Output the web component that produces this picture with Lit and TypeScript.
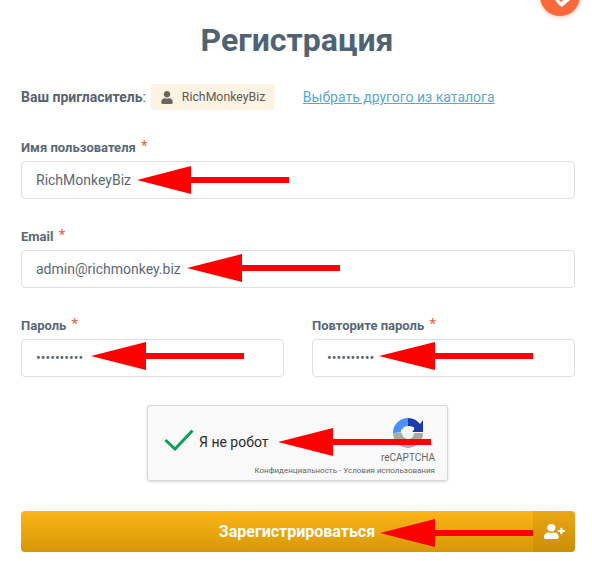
import { LitElement, html, css, svg } from "lit";
import { customElement } from "lit/decorators.js";

const USER = "M224 256c70.7 0 128-57.3 128-128S294.7 0 224 0 96 57.3 96 128s57.3 128 128 128zm89.6 32h-16.7c-22.2 10.2-46.9 16-72.9 16s-50.6-5.8-72.9-16h-16.7C60.2 288 0 348.2 0 422.4V464c0 26.5 21.5 48 48 48h352c26.5 0 48-21.5 48-48v-41.6c0-74.2-60.2-134.4-134.4-134.4z";
const USER_PLUS = "M624 208h-64v-64c0-8.8-7.2-16-16-16h-32c-8.8 0-16 7.2-16 16v64h-64c-8.8 0-16 7.2-16 16v32c0 8.8 7.2 16 16 16h64v64c0 8.8 7.2 16 16 16h32c8.8 0 16-7.2 16-16v-64h64c8.8 0 16-7.2 16-16v-32c0-8.8-7.2-16-16-16zm-400 48c70.7 0 128-57.3 128-128S294.7 0 224 0 96 57.3 96 128s57.3 128 128 128zm89.6 32h-16.7c-22.2 10.2-46.9 16-72.9 16s-50.6-5.8-72.9-16h-16.7C60.2 288 0 348.2 0 422.4V464c0 26.5 21.5 48 48 48h352c26.5 0 48-21.5 48-48v-41.6c0-74.2-60.2-134.4-134.4-134.4z";

// tip x, y, head base x, shaft end x
const ARROWS: [number, number, number, number][] = [
  [137, 180, 191, 289],
  [187, 268, 242, 340],
  [91, 356, 146, 244],
  [379, 356, 435, 533],
  [278, 442, 333, 431],
  [380, 533, 435, 533],
];

@customElement("app-root")
export class AppRoot extends LitElement {
  static styles = css`
    :host {
      display: block;
      position: relative;
      width: 592px;
      height: 561px;
      overflow: hidden;
      background: #fff;
      font-family: Roboto, "Liberation Sans", sans-serif;
      color: #54626f;
    }
    .page {
      display: flex;
      flex-direction: column;
      padding: 0 17px 0 21px;
    }
    h1 {
      margin: 21px 2px 0 0;
      height: 38px;
      line-height: 38px;
      text-align: center;
      font-size: 32px;
      font-weight: 700;
      color: #506373;
    }
    .inviter {
      margin-top: 25px;
      height: 26px;
      display: flex;
      align-items: center;
      font-size: 14px;
    }
    .inviter b { font-weight: 700; color: #57636f; }
    .chip {
      margin-left: 5px;
      width: 124px;
      height: 26px;
      box-sizing: border-box;
      padding-left: 10px;
      display: flex;
      align-items: center;
      gap: 9px;
      border-radius: 3px;
      background: #fdf3e3;
      font-size: 12.3px;
      color: #5f5a52;
    }
    .chip svg { width: 12px; height: 13px; fill: #6b655c; }
    a {
      margin-left: 28px;
      font-size: 14px;
      color: #5aa6d8;
      text-decoration: underline;
    }
    .field { display: flex; flex-direction: column; min-width: 0; }
    .field label {
      height: 18px;
      line-height: 18px;
      font-size: 13px;
      font-weight: 700;
      color: #5a6875;
      margin-bottom: 5px;
    }
    .req { color: #ec5c45; font-weight: 400; font-size: 15px; margin-left: 2px; position: relative; top: -1px; }
    input {
      box-sizing: border-box;
      width: 100%;
      height: 38px;
      padding: 0 14px;
      border: 1px solid #dce0e3;
      border-radius: 4px;
      background: #fff;
      font-family: inherit;
      font-size: 14px;
      color: #5b6875;
      outline: none;
    }
    .rows {
      margin-top: 28px;
      display: flex;
      flex-direction: column;
      gap: 28px;
    }
    .pair {
      display: grid;
      grid-template-columns: 263px 263px;
      column-gap: 28px;
    }
    .captcha {
      margin: 28px 0 0 126px;
      width: 301px;
      height: 76px;
      box-sizing: border-box;
      display: flex;
      border: 1px solid #d6d6d6;
      border-radius: 3px;
      background: #f9f9f9;
      box-shadow: 0 1px 3px rgba(0, 0, 0, 0.15);
      padding: 0 12px 0 16px;
      position: relative;
    }
    .check { width: 30px; height: 24px; margin-top: 21px; flex: none; }
    .robot {
      margin: 27px 0 0 5px;
      font-size: 14px;
      line-height: 18px;
      color: #2b2b2b;
      flex: 1;
    }
    .rc {
      width: 190px;
      position: absolute;
      right: 12px;
      top: 11px;
      display: flex;
      flex-direction: column;
      align-items: flex-end;
    }
    .rc svg { width: 32px; height: 32px; margin-right: 11px; }
    .rc .brand { margin-top: 3px; font-size: 10px; line-height: 12px; color: #666; }
    .rc .terms { margin-top: 1px; font-size: 8px; line-height: 12px; color: #666; white-space: nowrap; }
    .btn {
      margin-top: 30px;
      width: 554px;
      height: 41px;
      display: flex;
      border-radius: 4px;
      overflow: hidden;
      background: linear-gradient(#fdb517, #d69808);
      color: #fff;
    }
    .btn .text {
      flex: 1;
      padding-left: 40px;
      display: flex;
      align-items: center;
      justify-content: center;
      font-size: 16px;
      font-weight: 700;
    }
    .btn .ico {
      width: 42px;
      display: flex;
      align-items: center;
      justify-content: center;
      background: rgba(120, 80, 0, 0.13);
    }
    .btn .ico svg { width: 21px; height: 15px; fill: #fff; }
    .badge {
      position: absolute;
      left: 540px;
      top: -24px;
      width: 40px;
      height: 40px;
      border-radius: 50%;
      background: #f96a3a;
      box-shadow: 0 1px 4px rgba(249, 106, 58, 0.4);
    }
    .badge svg { position: absolute; left: 0; top: 0; width: 40px; height: 40px; }
    .overlay {
      position: absolute;
      left: 0;
      top: 0;
      width: 592px;
      height: 561px;
      pointer-events: none;
    }
    .overlay polygon { fill: #fe0000; }
  `;

  private arrow([tip, y, base, end]: [number, number, number, number]) {
    const pts = [
      [tip, y], [base, y - 14], [base, y - 3], [end, y - 3],
      [end, y + 3], [base, y + 3], [base, y + 14],
    ].map((p) => p.join(",")).join(" ");
    return svg`<polygon points=${pts}></polygon>`;
  }

  private field(label: string, value: string, type = "text") {
    return html`<div class="field">
      <label>${label} <span class="req">*</span></label>
      <input type=${type} .value=${value} readonly />
    </div>`;
  }

  render() {
    return html`
      <div class="page">
        <h1>Регистрация</h1>
        <div class="inviter">
          <span><b>Ваш пригласитель</b>:</span>
          <span class="chip">
            <svg viewBox="0 0 448 512"><path d=${USER}></path></svg>
            RichMonkeyBiz
          </span>
          <a>Выбрать другого из каталога</a>
        </div>
        <div class="rows">
          ${this.field("Имя пользователя", "RichMonkeyBiz")}
          ${this.field("Email", "admin@richmonkey.biz")}
          <div class="pair">
            ${this.field("Пароль", "1234567890", "password")}
            ${this.field("Повторите пароль", "1234567890", "password")}
          </div>
        </div>
        <div class="captcha">
          <svg class="check" viewBox="0 0 30 24">
            <path d="M1.5 13 L11 22 L28.5 3.5" fill="none" stroke="#0f9d58" stroke-width="3"></path>
          </svg>
          <div class="robot">Я не робот</div>
          <div class="rc">
            <svg viewBox="0 0 32 32">
              <path d="M1 16 A15 15 0 0 0 31 16 L22 16 A6 6 0 0 1 10 16 Z" fill="#ababab"></path>
              <path d="M16 1 A15 15 0 0 1 28 7 L31 3 L31 15 L19 15 L22.5 11 A8 8 0 0 0 16 9 Z" fill="#1c3aa9"></path>
              <path d="M1 16 L1 15 A15 15 0 0 1 16 1 L16 9 A8 8 0 0 0 10.5 11 L14 15 L1 16 Z" fill="#4a90f5"></path>
              <circle cx="17" cy="17" r="4.5" fill="#f9f9f9"></circle>
              <circle cx="11" cy="14" r="2.2" fill="#f9f9f9"></circle>
              <circle cx="20" cy="12" r="2" fill="#f9f9f9"></circle>
            </svg>
            <div class="brand">reCAPTCHA</div>
            <div class="terms">Конфиденциальность - Условия использования</div>
          </div>
        </div>
        <div class="btn">
          <div class="text">Зарегистрироваться</div>
          <div class="ico"><svg viewBox="0 0 640 512" preserveAspectRatio="none"><path d=${USER_PLUS}></path></svg></div>
        </div>
      </div>
      <div class="badge">
        <svg viewBox="0 0 40 40">
          <path d="M15 24 L30 24 L22 31 L19 29 Z" fill="#fff"></path>
          <circle cx="21" cy="24" r="1.8" fill="#f96a3a"></circle>
        </svg>
      </div>
      <svg class="overlay" viewBox="0 0 592 561">${ARROWS.map((a) => this.arrow(a))}</svg>
    `;
  }
}
